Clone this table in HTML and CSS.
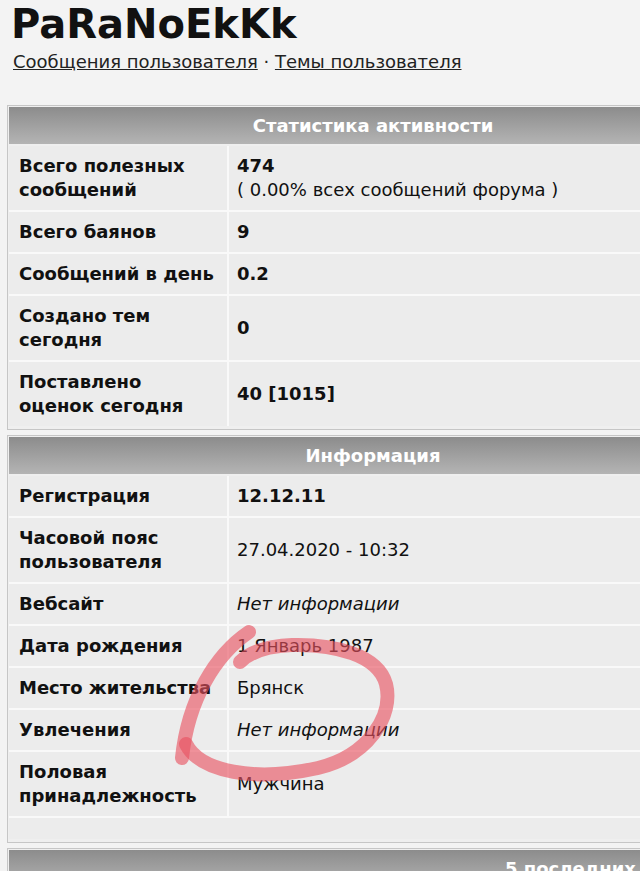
FILE: index.html
```html
<!DOCTYPE html>
<html lang="ru">
<head>
<meta charset="utf-8">
<title>PaRaNoEkKk</title>
<link rel="stylesheet" href="styles.css">
</head>
<body>
<div class="page">
  <h1 class="username">PaRaNoEkKk</h1>
  <div class="links"><a href="#">Сообщения пользователя</a> · <a href="#">Темы пользователя</a></div>

  <section class="panel">
    <div class="panel-head">Статистика активности</div>
    <div class="grid">
      <div class="label">Всего полезных сообщений</div>
      <div class="value"><div><b>474</b><br>( 0.00% всех сообщений форума )</div></div>
      <div class="label">Всего баянов</div>
      <div class="value"><b>9</b></div>
      <div class="label">Сообщений в день</div>
      <div class="value"><b>0.2</b></div>
      <div class="label">Создано тем сегодня</div>
      <div class="value"><b>0</b></div>
      <div class="label">Поставлено оценок сегодня</div>
      <div class="value"><b>40 [1015]</b></div>
    </div>
  </section>

  <section class="panel">
    <div class="panel-head">Информация</div>
    <div class="grid">
      <div class="label">Регистрация</div>
      <div class="value"><b>12.12.11</b></div>
      <div class="label">Часовой пояс пользователя</div>
      <div class="value">27.04.2020 - 10:32</div>
      <div class="label">Вебсайт</div>
      <div class="value"><i>Нет информации</i></div>
      <div class="label">Дата рождения</div>
      <div class="value">1 Январь 1987</div>
      <div class="label">Место жительства</div>
      <div class="value">Брянск</div>
      <div class="label">Увлечения</div>
      <div class="value"><i>Нет информации</i></div>
      <div class="label">Половая принадлежность</div>
      <div class="value">Мужчина</div>
      <div class="spacer"></div>
    </div>
  </section>

  <section class="panel">
    <div class="panel-head panel-head-off">5 последних</div>
  </section>
</div>

<svg class="scribble" width="640" height="871" viewBox="0 0 640 871" aria-hidden="true">
  <path d="M 249 632 C 215 655, 188 700, 182 758" />
  <path d="M 186 744 C 200 772, 255 782, 318 768 C 368 756, 394 716, 386 684 C 378 655, 335 644, 292 645 C 268 646, 250 652, 240 662" />
</svg>
</body>
</html>
```

FILE: styles.css
```css
html, body {
  overflow: hidden;
}
body {
  margin: 0;
  background: #f3f3f3;
  font-family: "DejaVu Sans", Verdana, sans-serif;
  color: #111;
}
.page {
  width: 740px;
  position: relative;
}
.username {
  margin: 0;
  padding: 0 0 0 11px;
  font-size: 40px;
  line-height: 48px;
  font-weight: bold;
  color: #111;
}
.links {
  padding: 1px 0 0 13px;
  font-size: 18px;
  line-height: 26px;
  margin-bottom: 30px;
  color: #222;
}
.links a {
  color: #222;
  text-decoration: underline;
}
.panel {
  margin: 0 0 5px 7px;
  width: 728px;
  border: 1px solid #c6c6c6;
  padding: 1px 1px 3px;
  background: #efefef;
}
.panel-head {
  height: 37px;
  line-height: 37px;
  text-align: center;
  color: #fff;
  font-weight: bold;
  font-size: 18px;
  background: linear-gradient(#8c8c8c, #b4b4b4);
}
.panel-head-off {
  text-align: left;
  padding-left: 496px;
}
.grid {
  display: grid;
  grid-template-columns: 218px 1fr;
  gap: 2px;
  margin-top: 2px;
  background: #f9f9f9;
}
.label, .value {
  background: #ececec;
  padding: 8px 7px 8px 10px;
  min-height: 24px;
  line-height: 24px;
  font-size: 18px;
  display: flex;
  flex-direction: column;
  justify-content: center;
  align-items: flex-start;
}
.label {
  font-weight: bold;
}
.value {
  padding-left: 8px;
}
.spacer {
  grid-column: 1 / -1;
  height: 21px;
  background: #ececec;
}
.scribble {
  position: absolute;
  left: 0;
  top: 0;
  pointer-events: none;
}
.scribble path {
  fill: none;
  stroke: #e8505f;
  stroke-opacity: 0.62;
  stroke-width: 14;
  stroke-linecap: round;
}
```
